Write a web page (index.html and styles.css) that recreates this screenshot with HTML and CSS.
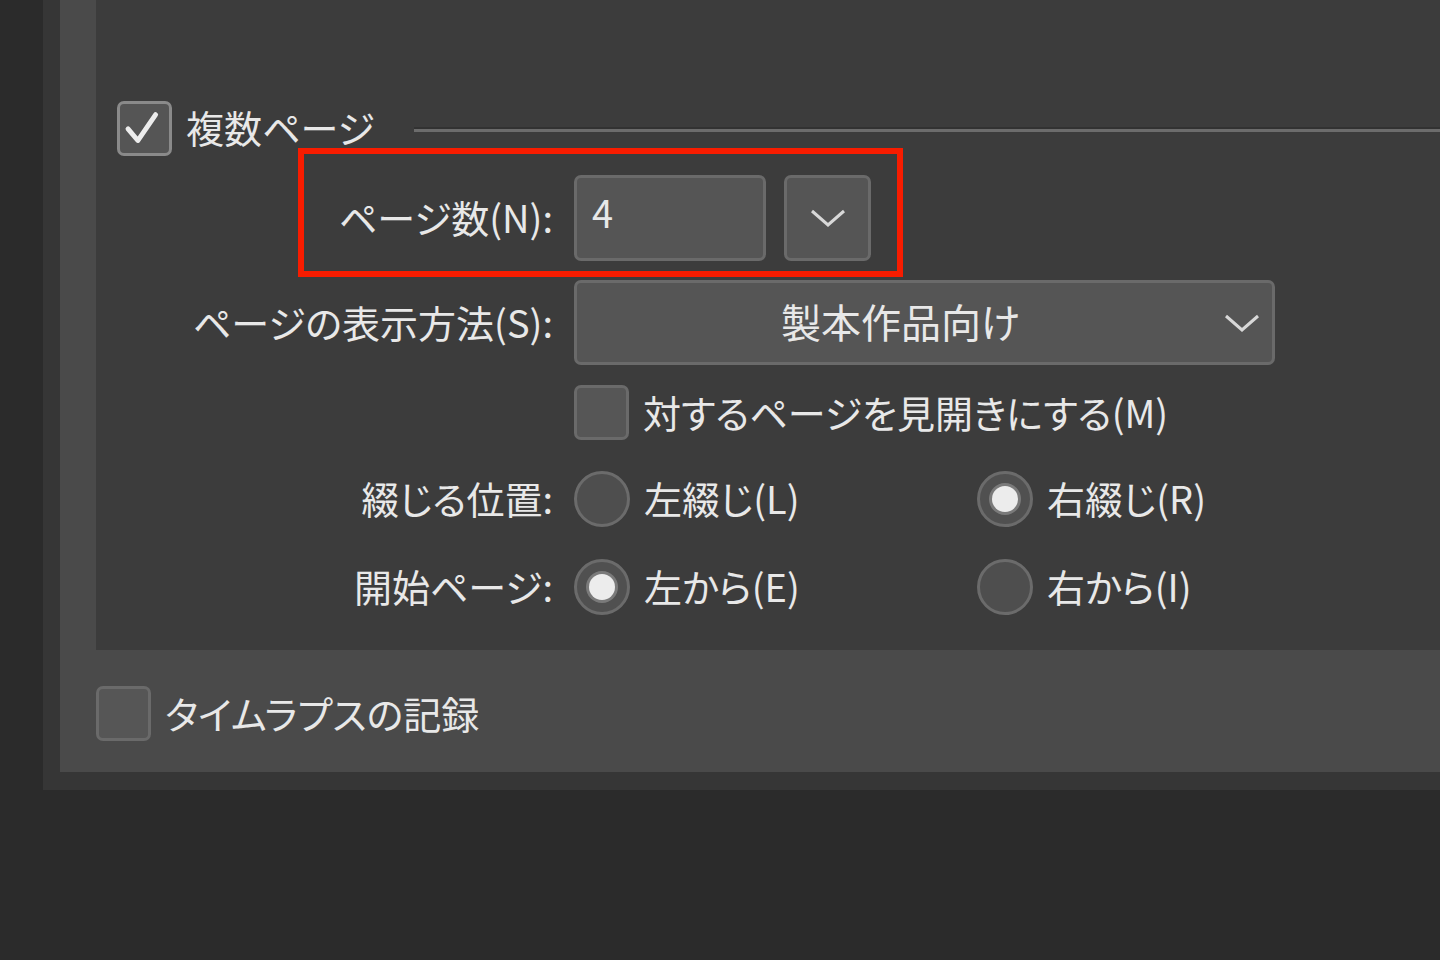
FILE: index.html
```html
<!DOCTYPE html>
<html lang="ja">
<head>
<meta charset="utf-8">
<title>複数ページ</title>
<link rel="stylesheet" href="styles.css">
</head>
<body>
<div class="window">
  <div class="outer">
    <div class="inner">
      <div class="group-head">
        <span class="check checked">
          <svg viewBox="0 0 55 55" width="49" height="49"><path d="M9 28 L20 41 L40 12" fill="none" stroke="#ececec" stroke-width="5.5" stroke-linecap="round" stroke-linejoin="round"/></svg>
        </span>
        <span class="head-label">複数ページ</span>
        <span class="rule"></span>
      </div>

      <div class="form">
        <div class="row row-pages">
          <span class="lbl">ページ数(N):</span>
          <div class="ctrls">
            <div class="field">4</div>
            <div class="spin">
              <svg viewBox="0 0 36 20" width="36" height="20"><path d="M2 3 L18 17 L34 3" fill="none" stroke="#d8d8d8" stroke-width="3"/></svg>
            </div>
          </div>
        </div>

        <div class="row row-combo">
          <span class="lbl">ページの表示方法(S):</span>
          <div class="combo">
            <span class="combo-text">製本作品向け</span>
            <svg class="combo-arrow" viewBox="0 0 36 20" width="36" height="20"><path d="M2 3 L18 17 L34 3" fill="none" stroke="#d8d8d8" stroke-width="3"/></svg>
          </div>
        </div>

        <div class="row row-check">
          <span class="lbl"></span>
          <div class="opt">
            <span class="check"></span>
            <span class="opt-text">対するページを見開きにする(M)</span>
          </div>
        </div>

        <div class="row row-radio first">
          <span class="lbl">綴じる位置:</span>
          <div class="radios">
            <div class="opt"><span class="radio"></span><span class="opt-text">左綴じ(L)</span></div>
            <div class="opt"><span class="radio on"></span><span class="opt-text">右綴じ(R)</span></div>
          </div>
        </div>

        <div class="row row-radio">
          <span class="lbl">開始ページ:</span>
          <div class="radios">
            <div class="opt"><span class="radio on"></span><span class="opt-text">左から(E)</span></div>
            <div class="opt"><span class="radio"></span><span class="opt-text">右から(I)</span></div>
          </div>
        </div>
      </div>

      <div class="highlight"></div>
    </div>

    <div class="timelapse">
      <span class="check"></span>
      <span class="opt-text">タイムラプスの記録</span>
    </div>
  </div>
</div>
</body>
</html>
```

FILE: styles.css
```css
* { box-sizing: border-box; }

html, body {
  margin: 0;
  padding: 0;
  background: #2b2b2b;
  width: 1440px;
  height: 960px;
  overflow: hidden;
}

body {
  font-family: "Noto Sans CJK JP", "Noto Sans", sans-serif;
  font-feature-settings: "palt";
  font-size: 38px;
  line-height: 1;
  color: #e8e8e8;
}

.window {
  margin-left: 43px;
  height: 790px;
  background: #363636;
  padding: 0 0 18px 17px;
}

.outer {
  height: 772px;
  background: #4a4a4a;
  padding-left: 36px;
}

.inner {
  position: relative;
  height: 650px;
  background: #3c3c3c;
  padding-top: 100px;
}

.group-head {
  display: flex;
  align-items: center;
  height: 56px;
  padding-left: 21px;
}

.head-label {
  margin-left: 14px;
  padding-bottom: 2px;
}

.rule {
  flex: 1;
  margin-left: 39px;
  margin-top: 2px;
  height: 5px;
  border-top: 2px solid #323232;
  background: #6c6c6c;
}

.check {
  width: 55px;
  height: 55px;
  flex: none;
  border: 3px solid #6a6a6a;
  border-radius: 7px;
  background: #565656;
  display: flex;
  align-items: center;
  justify-content: center;
}

.check.checked {
  border-color: #8a8a8a;
  background: #555555;
}

.form {
  margin-top: 19px;
}

.row {
  display: grid;
  grid-template-columns: 457px 1fr;
  column-gap: 21px;
  align-items: center;
}

.lbl {
  text-align: right;
  white-space: nowrap;
  padding-bottom: 2px;
}

.row-pages { height: 86px; }
.row-combo { height: 85px; margin-top: 19px; }
.row-check { height: 55px; margin-top: 20px; }
.row-radio { height: 56px; margin-top: 32px; }
.row-radio.first { margin-top: 31px; }

.ctrls {
  display: flex;
  height: 86px;
}

.field {
  width: 192px;
  height: 86px;
  border: 3px solid #6a6a6a;
  border-radius: 7px;
  background: #555555;
  padding: 0 0 12px 15px;
  display: flex;
  align-items: center;
}

.spin {
  width: 87px;
  height: 86px;
  margin-left: 18px;
  border: 3px solid #6a6a6a;
  border-radius: 7px;
  background: #555555;
  display: flex;
  align-items: center;
  justify-content: center;
}

.combo {
  width: 701px;
  height: 85px;
  border: 3px solid #6a6a6a;
  border-radius: 7px;
  background: #555555;
  display: flex;
  align-items: center;
  padding: 0 12px 0 0;
}

.combo-text {
  flex: 1;
  text-align: center;
  padding-bottom: 4px;
  font-size: 40px;
}

.combo-arrow { flex: none; }

.opt {
  display: flex;
  align-items: center;
}

.opt-text {
  margin-left: 14px;
  white-space: nowrap;
  padding-bottom: 2px;
}

.radios {
  display: grid;
  grid-template-columns: 403px 1fr;
}

.radio {
  width: 56px;
  height: 56px;
  flex: none;
  border-radius: 50%;
  border: 3px solid #6b6b6b;
  background: #4e4e4e;
  display: flex;
  align-items: center;
  justify-content: center;
}

.radio.on {
  background: #505050;
}

.radio.on::after {
  content: "";
  width: 26px;
  height: 26px;
  border-radius: 50%;
  background: #ececec;
  box-shadow: 0 0 0 3px #7a7a7a;
}

.highlight {
  position: absolute;
  left: 202px;
  top: 148px;
  width: 605px;
  height: 129px;
  border: 6px solid #f81c00;
}

.timelapse {
  display: flex;
  align-items: center;
  margin-top: 36px;
  height: 55px;
}
```
